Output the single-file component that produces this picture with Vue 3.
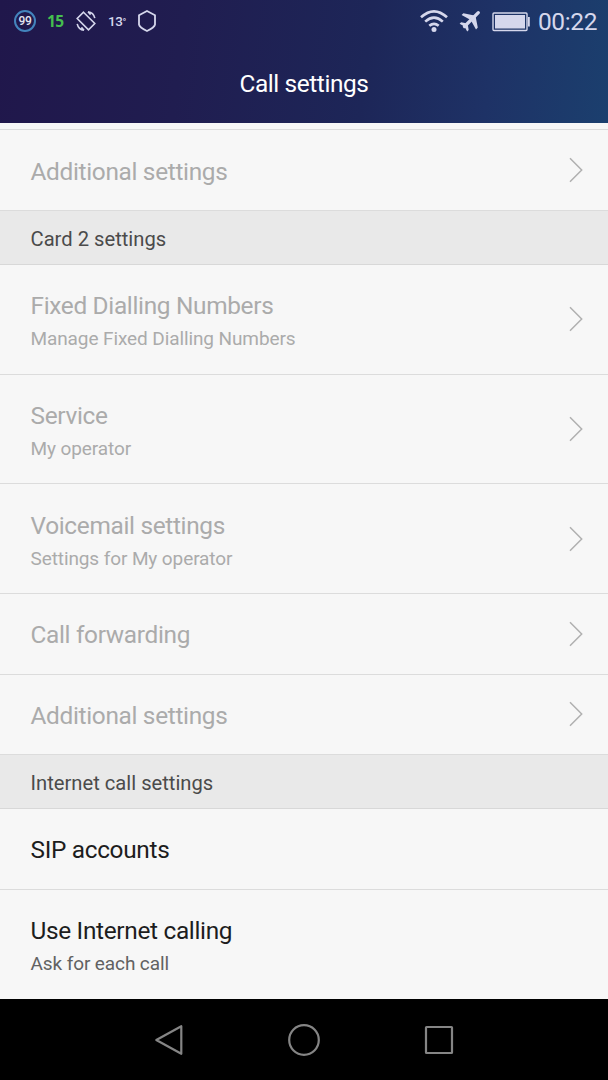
<template>
  <div class="phone">
    <header class="top">
      <div class="status-bar">
        <div class="status-left">
          <span class="badge">99</span>
          <span class="green">15</span>
          <svg class="rotate" width="22" height="22" viewBox="0 0 22 22">
            <path d="M8.500 2.200 19.800 13.500 13.500 19.800 2.200 8.500Z" />
            <path d="M13 1.800Q18.500 2.300 19.800 8.200M13 1.800l2.600 2.800M9 20.200Q3.500 19.700 2.200 13.800M9 20.200l-2.600-2.800" />
          </svg>
          <span class="temp">13<i>°</i></span>
          <svg class="hex" width="20" height="24" viewBox="0 0 20 24">
            <path d="M10 2 18 6.200V15.500Q17.500 18.500 10 22Q2.500 18.500 2 15.500V6.200Z" />
          </svg>
        </div>
        <div class="status-right">
          <svg class="wifi" width="30" height="24" viewBox="0 0 30 24">
            <path d="M2 8.300Q15-3.700 28 8.300M6.200 12.600Q15 4.600 23.800 12.600M10.300 16.800Q15 12.800 19.700 16.800" />
            <circle cx="15" cy="20.500" r="2.500" />
          </svg>
          <svg class="plane" width="22" height="22" viewBox="0 0 22 22">
            <path class="body" d="M19.300 2.700 5.500 16.500" />
            <path d="M2.600 5 4.400 3.200 15.400 5.400 10.800 9.600ZM17 19.400 18.800 17.600 16.600 6.600 12.400 11.200ZM.6 13.800 2.100 12.300 7.200 13.200 5 16.300ZM8.200 21.400 9.700 19.900 8.800 14.800 5.700 17Z" />
          </svg>
          <svg class="battery" width="38" height="20" viewBox="0 0 38 20">
            <rect class="case" x="1" y="1" width="34" height="17.500" rx="1" />
            <rect class="charge" x="3" y="3" width="30" height="13.500" />
            <path class="charge" d="M36 5h1.800v9.500H36Z" />
          </svg>
          <span class="clock">00:22</span>
        </div>
      </div>
      <h1>Call settings</h1>
    </header>

    <main class="list">
      <div class="previous"></div>
      <template v-for="(item, i) in items" :key="i">
        <h2 v-if="item.section" class="section">{{ item.section }}</h2>
        <div v-else class="row" :class="{ double: item.summary, disabled: item.disabled }">
          <div class="texts">
            <div class="title">{{ item.title }}</div>
            <div v-if="item.summary" class="summary">{{ item.summary }}</div>
          </div>
          <svg v-if="item.disabled" class="chevron" width="14" height="26" viewBox="0 0 14 26">
            <path d="M1 1.300 12.700 13 1 24.700" />
          </svg>
        </div>
      </template>
    </main>

    <nav class="nav-bar">
      <svg width="36" height="36" viewBox="0 0 36 36"><path d="M30.300 4.200V31.800L5.300 18Z" /></svg>
      <svg width="36" height="36" viewBox="0 0 36 36"><circle cx="18" cy="18" r="14.800" /></svg>
      <svg width="36" height="36" viewBox="0 0 36 36"><rect x="5" y="5" width="26" height="26" rx=".5" /></svg>
    </nav>
  </div>
</template>

<script setup>
import { ref } from 'vue'

const items = ref([
  { title: 'Additional settings', disabled: true },
  { section: 'Card 2 settings' },
  { title: 'Fixed Dialling Numbers', summary: 'Manage Fixed Dialling Numbers', disabled: true },
  { title: 'Service', summary: 'My operator', disabled: true },
  { title: 'Voicemail settings', summary: 'Settings for My operator', disabled: true },
  { title: 'Call forwarding', disabled: true },
  { title: 'Additional settings', disabled: true },
  { section: 'Internet call settings' },
  { title: 'SIP accounts' },
  { title: 'Use Internet calling', summary: 'Ask for each call' }
])
</script>

<style>
body { margin: 0; background: #000; }
</style>

<style scoped>
.phone { width: 608px; height: 1080px; display: flex; flex-direction: column; overflow: hidden; background: #f7f7f7; font-family: Roboto, "Liberation Sans", sans-serif; }
svg { display: block; fill: none; flex: none; }

.top { flex: none; height: 123px; background: linear-gradient(97deg, #20174b 0%, #201d50 30%, #1d2658 60%, #1e3266 80%, #1b3f6e 100%); }
.status-bar { height: 44px; display: flex; justify-content: space-between; padding: 0 11px 0 14px; }
.status-left, .status-right { display: flex; align-items: center; color: #d5d7ec; }
.badge { box-sizing: border-box; width: 22px; height: 22px; margin-top: -2px; border: 2px solid #4384bd; border-radius: 50%; font-size: 12px; font-weight: 500; line-height: 18px; text-align: center; letter-spacing: -0.2px; color: #e2e2ef; }
.green { width: 18px; margin: -2px 0 0 11px; font: bold 15.5px/20px "Noto Sans", "DejaVu Sans", sans-serif; letter-spacing: -0.5px; color: #45bf4f; }
.rotate { margin: -2px 0 0 10px; stroke: #d5d7ec; stroke-width: 1.6; }
.temp { width: 20px; margin: -1px 0 0 11px; font-size: 13.5px; font-weight: 500; line-height: 20px; letter-spacing: -0.4px; }
.temp i { font-size: 10px; font-style: normal; }
.hex { margin: -2px 0 0 9px; stroke: #d5d7ec; stroke-width: 1.8; }
.wifi { margin-top: -2px; stroke: #d5d7ec; stroke-width: 2.6; }
.wifi circle { fill: #d5d7ec; stroke: none; }
.plane { margin: -2px 0 0 10px; fill: #d5d7ec; }
.body { stroke: #d5d7ec; stroke-width: 3.3; stroke-linecap: round; }
.battery { margin: -1px 0 0 11px; }
.case { stroke: #d5d7ec; stroke-width: 1.4; }
.charge { fill: #d5d7ec; }
.clock { margin-left: 8px; font-size: 24.5px; line-height: 44px; letter-spacing: -0.4px; }
h1 { margin: 0; font-size: 24.4px; font-weight: 400; line-height: 80px; text-align: center; letter-spacing: -0.4px; color: #fff; }

.list { flex: none; height: 876px; overflow: hidden; }
.previous { box-sizing: border-box; height: 7.4px; border-bottom: 1px solid #dcdcdc; }
.row { box-sizing: border-box; height: 80.6px; display: flex; align-items: center; justify-content: space-between; padding: 1px 25px 0 30.500px; border-bottom: 1px solid #dcdcdc; }
.previous + .row { height: 80.8px; }
.row.double { height: 109.7px; }
.row:last-child { border-bottom-color: transparent; }
.texts { padding-top: 2px; }
.double .texts { padding-top: 3px; }
.title { font-size: 24.4px; line-height: 32px; letter-spacing: -0.32px; color: #1d1d1d; white-space: nowrap; }
.summary { margin-top: 4px; font-size: 19px; line-height: 26px; letter-spacing: -0.1px; color: #626262; white-space: nowrap; }
.disabled .title, .disabled .summary { color: #ababab; }
.chevron { margin-top: -1px; stroke: #b0b0b0; stroke-width: 1.5; }
.section { box-sizing: border-box; height: 53.8px; margin: 0; padding-left: 30.500px; border-bottom: 1px solid #d8d8d8; background: #e9e9e9; font-size: 20.2px; font-weight: 400; line-height: 56px; color: #4b4b4b; }

.nav-bar { flex: 1; display: flex; justify-content: center; align-items: center; gap: 99px; background: #000; }
.nav-bar svg { stroke: #858585; stroke-width: 2.2; stroke-linejoin: round; }
</style>
